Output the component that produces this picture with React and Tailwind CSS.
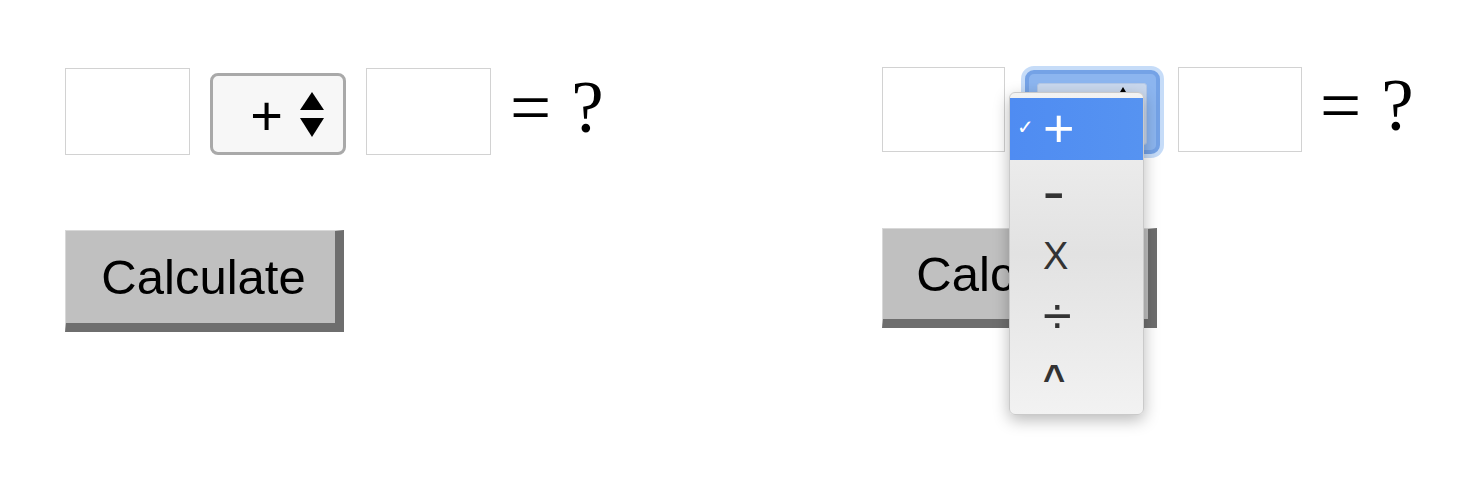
import React from "react";

const sans = { fontFamily: '"Liberation Sans", Arial, sans-serif' };
const serif = { fontFamily: '"Liberation Serif", "Times New Roman", serif' };

const Arrows = () => (
  <svg width="24" height="45" viewBox="0 0 24 45" className="block">
    <polygon points="12,0 0,18 24,18" fill="#000" />
    <polygon points="0,26 24,26 12,45" fill="#000" />
  </svg>
);

const NumberBox = ({ className = "" }) => (
  <input
    type="text"
    className={`border border-[#d2d2d2] bg-white outline-none ${className}`}
  />
);

const CalcButton = ({ className = "" }) => (
  <button
    type="button"
    className={`flex items-center justify-center bg-[#c0c0c0] border-t border-l border-t-[#d8d8d8] border-l-[#d8d8d8] border-r-[9px] border-b-[9px] border-r-[#6e6e6e] border-b-[#6e6e6e] text-[49px] text-black leading-none ${className}`}
    style={sans}
  >
    Calculate
  </button>
);

const Result = ({ className = "" }) => (
  <div className={`flex text-[73px] leading-[73px] text-black ${className}`} style={serif}>
    <span>=</span>
    <span className="ml-[20px]">?</span>
  </div>
);

const options = ["+", "-", "X", "÷", "^"];

const opClass = {
  "+": "text-[54px] mt-[-2px]",
  "-": "text-[38px] font-bold scale-x-[1.7] origin-left mt-[4px]",
  X: "text-[38px] mt-[6px]",
  "÷": "text-[52px] mt-[2px]",
  "^": "text-[38px] font-bold mt-[4px]",
};

const OpMenu = () => (
  <div
    className="absolute left-[-16px] top-[22px] z-10 w-[135px] h-[323px] rounded-[6px] border border-[#cacaca] bg-gradient-to-b from-[#f2f2f2] via-[#e2e2e2] to-[#f2f2f2] shadow-[0_5px_16px_rgba(0,0,0,0.28)] pt-[5px] pb-[7px] overflow-hidden"
    style={sans}
  >
    {options.map((op, i) => (
      <div
        key={op}
        className={`relative flex items-center h-[62px] pl-[33px] leading-none ${
          i === 0
            ? "bg-gradient-to-r from-[#4f8cf2] to-[#5693f1] text-white"
            : "text-[#333333]"
        }`}
      >
        {i === 0 && (
          <span
            className="absolute left-[7px] top-[19px] text-[20px] font-bold"
            style={{ fontFamily: '"DejaVu Sans", sans-serif' }}
          >
            ✓
          </span>
        )}
        <span className={opClass[op]}>{op}</span>
      </div>
    ))}
  </div>
);

export default function App() {
  return (
    <div className="w-[1468px] h-[484px] bg-white flex overflow-hidden">
      {/* plain state */}
      <div className="w-[882px] shrink-0 pl-[65px] pt-[68px] flex flex-col">
        <div className="flex items-start">
          <NumberBox className="w-[125px] h-[87px]" />
          <div
            className="ml-[20px] mt-[5px] w-[136px] h-[82px] rounded-[8px] border-[3px] border-[#a9a9a9] bg-[#f7f7f7] flex items-center justify-end pr-[19px]"
            style={sans}
          >
            <span className="text-[56px] leading-none mr-[17px] mt-[4px]">+</span>
            <Arrows />
          </div>
          <NumberBox className="ml-[20px] w-[125px] h-[87px]" />
          <Result className="ml-[19px] mt-[3px]" />
        </div>
        <CalcButton className="mt-[75px] w-[279px] h-[102px] pl-[6px]" />
      </div>

      {/* open dropdown state */}
      <div className="pt-[67px] flex flex-col">
        <div className="flex items-start">
          <NumberBox className="w-[123px] h-[85px]" />
          <div className="relative ml-[20px] mt-[3px]">
            <div className="w-[135px] h-[84px] rounded-[9px] border-[4px] border-[#74a2e6] bg-[#8cb5ef] shadow-[0_0_0_4px_#c6dcf8] pt-[9px] pl-[8px] pr-[9px] pb-[5px]">
              <div className="relative h-full rounded-[3px] bg-[#c9d8ee] border border-[#b4c8e6]">
                <span className="absolute right-[20px] top-[3px] w-0 h-0 border-l-[3px] border-r-[3px] border-b-[5px] border-l-transparent border-r-transparent border-b-black" />
              </div>
            </div>
            <OpMenu />
          </div>
          <NumberBox className="ml-[18px] w-[124px] h-[85px]" />
          <Result className="ml-[18px] mt-[2px]" />
        </div>
        <CalcButton className="mt-[74px] w-[275px] h-[100px] pl-[6px]" />
      </div>
    </div>
  );
}
